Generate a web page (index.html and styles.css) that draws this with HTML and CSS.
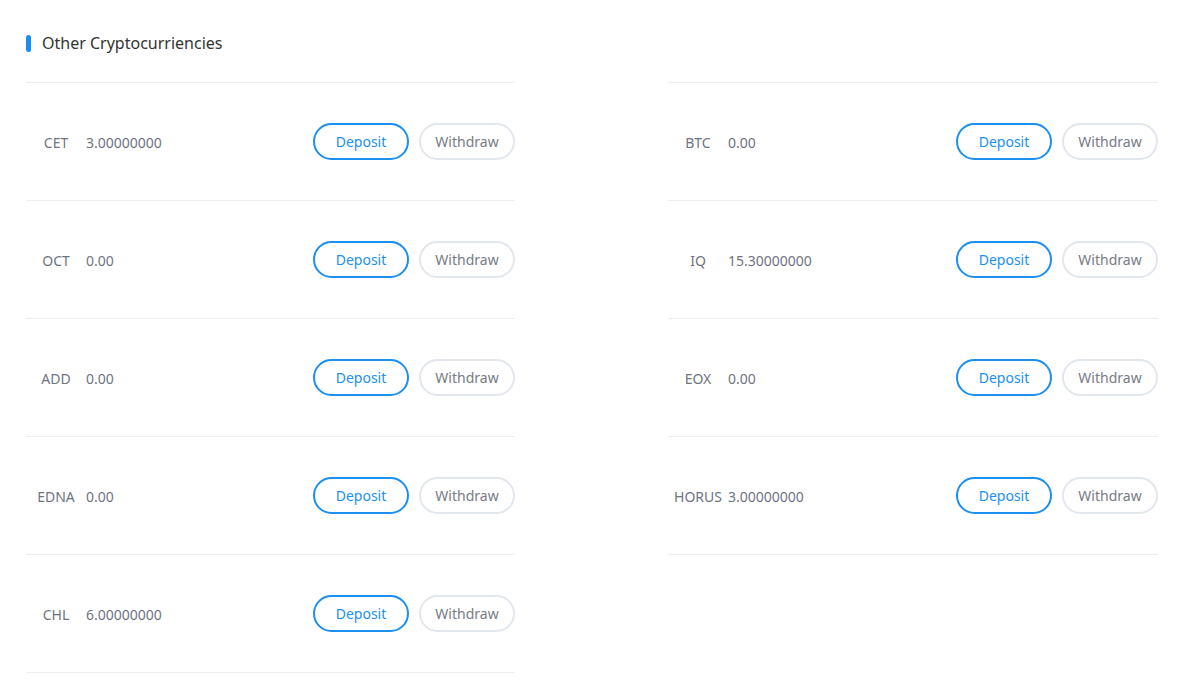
FILE: index.html
```html
<!DOCTYPE html>
<html>
<head>
<meta charset="utf-8">
<link rel="stylesheet" href="styles.css">
</head>
<body>
<div class="page">
  <h2 class="title"><span class="bar"></span>Other Cryptocurriencies</h2>
  <div class="grid">
    <div class="col">
      <div class="row"><span class="sym">CET</span><span class="amt">3.00000000</span><span class="btns"><button class="btn dep">Deposit</button><button class="btn wd">Withdraw</button></span></div>
      <div class="row"><span class="sym">OCT</span><span class="amt">0.00</span><span class="btns"><button class="btn dep">Deposit</button><button class="btn wd">Withdraw</button></span></div>
      <div class="row"><span class="sym">ADD</span><span class="amt">0.00</span><span class="btns"><button class="btn dep">Deposit</button><button class="btn wd">Withdraw</button></span></div>
      <div class="row"><span class="sym">EDNA</span><span class="amt">0.00</span><span class="btns"><button class="btn dep">Deposit</button><button class="btn wd">Withdraw</button></span></div>
      <div class="row"><span class="sym">CHL</span><span class="amt">6.00000000</span><span class="btns"><button class="btn dep">Deposit</button><button class="btn wd">Withdraw</button></span></div>
    </div>
    <div class="col">
      <div class="row"><span class="sym">BTC</span><span class="amt">0.00</span><span class="btns"><button class="btn dep">Deposit</button><button class="btn wd">Withdraw</button></span></div>
      <div class="row"><span class="sym">IQ</span><span class="amt">15.30000000</span><span class="btns"><button class="btn dep">Deposit</button><button class="btn wd">Withdraw</button></span></div>
      <div class="row"><span class="sym">EOX</span><span class="amt">0.00</span><span class="btns"><button class="btn dep">Deposit</button><button class="btn wd">Withdraw</button></span></div>
      <div class="row"><span class="sym">HORUS</span><span class="amt">3.00000000</span><span class="btns"><button class="btn dep">Deposit</button><button class="btn wd">Withdraw</button></span></div>
    </div>
  </div>
</div>
</body>
</html>
```

FILE: styles.css
```css
html, body {
  margin: 0;
  padding: 0;
  background: #fff;
}
body {
  font-family: "Noto Sans", "Open Sans", sans-serif;
  color: #666;
}
.page {
  padding: 33px 34px 0 26px;
}
.title {
  display: flex;
  align-items: center;
  margin: 0 0 29px 0;
  font-size: 16px;
  font-weight: normal;
  line-height: 20px;
  color: #333;
}
.bar {
  width: 5px;
  height: 17px;
  border-radius: 3px;
  background: #1a8cf0;
  margin-right: 11px;
}
.grid {
  display: grid;
  grid-template-columns: 489px 490px;
  column-gap: 153px;
  align-items: start;
}
.col {
  border-top: 1px solid #eeeeee;
}
.row {
  display: flex;
  align-items: center;
  height: 117px;
  border-bottom: 1px solid #eeeeee;
  font-size: 14px;
  color: #6e7480;
}
.sym {
  width: 60px;
  text-align: center;
  flex: none;
  padding-top: 1px;
}
.amt {
  flex: 1;
  padding-top: 1px;
}
.btns {
  display: flex;
  gap: 10px;
}
.btn {
  width: 96px;
  height: 37px;
  border-radius: 19px;
  background: #fff;
  font-family: "Noto Sans", "Open Sans", sans-serif;
  font-size: 14px;
  padding: 0;
  cursor: pointer;
}
.dep {
  border: 2px solid #1c8ff0;
  color: #1c8ff0;
}
.wd {
  border: 2px solid #e2e7ee;
  color: #777b85;
}
```
